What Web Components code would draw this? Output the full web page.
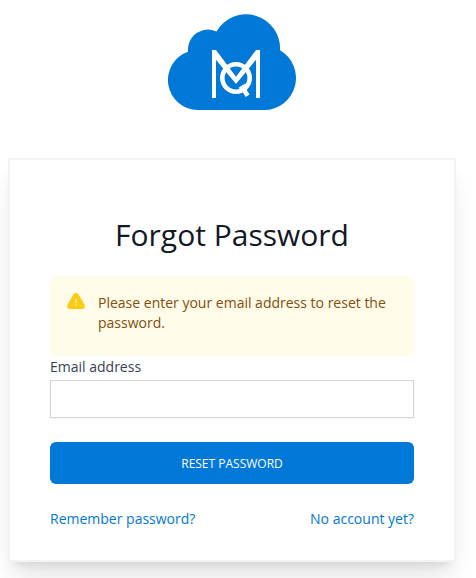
<!DOCTYPE html>
<html lang="en">
<head>
<meta charset="utf-8">
<title>Forgot Password</title>
<style>
html,body{margin:0;height:578px;overflow:hidden;background:#fff}
body{font-family:"Open Sans","Noto Sans",sans-serif}
</style>
</head>
<body>
<forgot-page></forgot-page>
<script>
function define(name, html) {
  const t = document.createElement('template');
  t.innerHTML = html;
  customElements.define(name, class extends HTMLElement {
    constructor() {
      super();
      this.attachShadow({mode: 'open'}).append(t.content.cloneNode(true));
    }
  });
}

define('cloud-logo', `
<style>:host{display:block;width:128px;height:96px}svg{display:block}</style>
<svg width="128" height="96" viewBox="168 14 128 96">
  <path fill="#0078d7" d="M198 110A30 30 0 0 1 188 51.7V50A20 20 0 0 1 216.500 31.500A34 34 0 0 1 280 50.300A32 32 0 0 1 264 110Z"/>
  <g fill="none" stroke="#fff" stroke-width="4">
    <path d="M214 50V98M258 50V98"/>
    <circle cx="236" cy="78" r="13.700" stroke-width="4.600"/>
    <path d="M239.500 89L246 84.800" stroke-width="3"/>
    <path d="M241.500 86L247.600 95.800" stroke-width="4.600"/>
  </g>
  <path fill="#fff" d="M212 50H216L236 76.800L256 50H260V55L236 84L212 55Z"/>
</svg>`);

define('auth-card', `
<style>
:host{display:block;box-sizing:border-box;width:448px;height:404px;border:2px solid #f3f3f3;background:#fff;padding:57px 40px 0;box-shadow:0 20px 25px -5px rgba(0,0,0,.1),0 8px 10px -6px rgba(0,0,0,.1)}
h1{margin:0 0 23px;font-size:30px;line-height:36px;font-weight:400;color:#111827;text-align:center}
</style>
<h1><slot name="title"></slot></h1><slot></slot>`);

define('warning-alert', `
<style>
:host{display:flex;box-sizing:border-box;height:80px;padding:17px 16px 15px;gap:12px;border-radius:6px;background:#fefce8;color:#854d0e;font-size:14px;line-height:20px}
svg{flex:none;width:20px;height:20px}
</style>
<svg viewBox="0 0 20 20"><path fill="#facc15" d="M7.300 1.600Q10 -1.700 12.700 1.600L18.200 11.200C19.800 14 18.600 16 16 16H4C1.400 16 .2 14 1.800 11.200Z"/><path fill="none" stroke="#fef08a" stroke-width="1.600" d="M10 5.800V10.200M10 11.500V13"/></svg>
<span><slot></slot></span>`);

define('text-field', `
<style>
:host{display:block;color:#374151;font-size:14px;line-height:20px}
label{display:block;padding-top:1px;margin-bottom:3px}
input{display:block;box-sizing:border-box;width:100%;height:38px;margin:0;padding:8px 12px;border:1px solid #d1d5db;border-radius:0;background:#fff;font:inherit;outline:0;box-shadow:0 1px 2px rgba(0,0,0,.05)}
</style>
<label for="email"><slot></slot></label><input id="email" type="email">`);

define('primary-button', `
<style>
:host{display:block;margin-top:24px}
button{display:block;box-sizing:border-box;width:100%;height:42px;border:0;padding:2px 0 0;border-radius:6px;background:#0078d7;color:#fff;font-family:inherit;font-size:12px;line-height:16px;text-transform:uppercase}
</style>
<button type="button"><slot></slot></button>`);

define('text-link', `
<style>:host{display:block}a{color:#0078d7;text-decoration:none;font-size:14px;line-height:20px;display:block}</style>
<a href="#"><slot></slot></a>`);

define('forgot-page', `
<style>
:host{display:block;padding:14px 20px 0 8px}
cloud-logo{margin-left:160px;margin-bottom:48px}
nav{display:flex;justify-content:space-between;margin-top:25px}
</style>
<cloud-logo></cloud-logo>
<auth-card>
  <span slot="title">Forgot Password</span>
  <warning-alert>Please enter your email address to reset the password.</warning-alert>
  <text-field>Email address</text-field>
  <primary-button>Reset password</primary-button>
  <nav><text-link>Remember password?</text-link><text-link>No account yet?</text-link></nav>
</auth-card>`);
</script>
</body>
</html>
